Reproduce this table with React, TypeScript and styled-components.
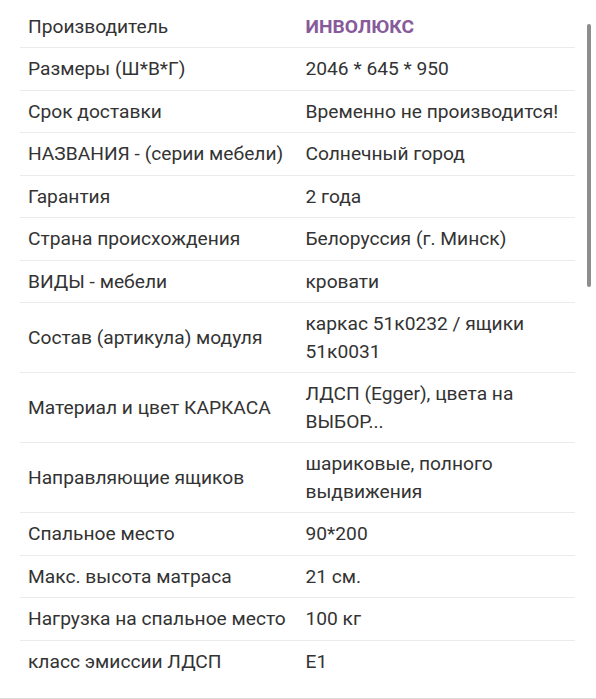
import React from 'react'
import styled, { createGlobalStyle } from 'styled-components'

type Spec = { label: string; value: string; brand?: boolean }

const specs: Spec[] = [
  { label: 'Производитель', value: 'ИНВОЛЮКС', brand: true },
  { label: 'Размеры (Ш*В*Г)', value: '2046 * 645 * 950' },
  { label: 'Срок доставки', value: 'Временно не производится!' },
  { label: 'НАЗВАНИЯ - (серии мебели)', value: 'Солнечный город' },
  { label: 'Гарантия', value: '2 года' },
  { label: 'Страна происхождения', value: 'Белоруссия (г. Минск)' },
  { label: 'ВИДЫ - мебели', value: 'кровати' },
  { label: 'Состав (артикула) модуля', value: 'каркас 51к0232 / ящики 51к0031' },
  { label: 'Материал и цвет КАРКАСА', value: 'ЛДСП (Egger), цвета на ВЫБОР...' },
  { label: 'Направляющие ящиков', value: 'шариковые, полного выдвижения' },
  { label: 'Спальное место', value: '90*200' },
  { label: 'Макс. высота матраса', value: '21 см.' },
  { label: 'Нагрузка на спальное место', value: '100 кг' },
  { label: 'класс эмиссии ЛДСП', value: 'E1' }
]

export default function App() {
  return (
    <>
      <GlobalStyle />
      <Page>
        <SpecTable>
          <tbody>
            {specs.map((spec, i) => (
              <Row key={spec.label} last={i === specs.length - 1}>
                <Label>{spec.label}</Label>
                <Value brand={spec.brand}>{spec.value}</Value>
              </Row>
            ))}
          </tbody>
        </SpecTable>
        <Scrollbar />
      </Page>
    </>
  )
}

const GlobalStyle = createGlobalStyle`
  html, body {
    margin: 0;
    background: #fff;
  }
`

const Page = styled.div`
  position: relative;
  width: 596px;
  height: 699px;
  box-sizing: border-box;
  padding: 5.5px 21px 0 20px;
  border-bottom: 1px solid #dcdcdc;
  overflow: hidden;
  font-family: Roboto, 'Noto Sans', sans-serif;
  color: #333;
`

const SpecTable = styled.table`
  width: 100%;
  border-collapse: collapse;
  font-size: 19.2px;
  line-height: 27.5px;
`

const Row = styled.tr<{ last?: boolean }>`
  border-bottom: ${props => (props.last ? 'none' : '1px solid #ebebeb')};
`

const Label = styled.td`
  width: 50%;
  padding: 7px 8px 7px 8px;
  vertical-align: middle;
`

const Value = styled.td<{ brand?: boolean }>`
  padding: 7px 8px 7px 8px;
  vertical-align: middle;
  color: ${props => (props.brand ? '#875a9b' : '#333')};
  font-weight: ${props => (props.brand ? 700 : 400)};
`

const Scrollbar = styled.div`
  position: absolute;
  top: 24px;
  right: 5px;
  width: 4px;
  height: 263px;
  border-radius: 2px;
  background: #8d8d8d;
`
